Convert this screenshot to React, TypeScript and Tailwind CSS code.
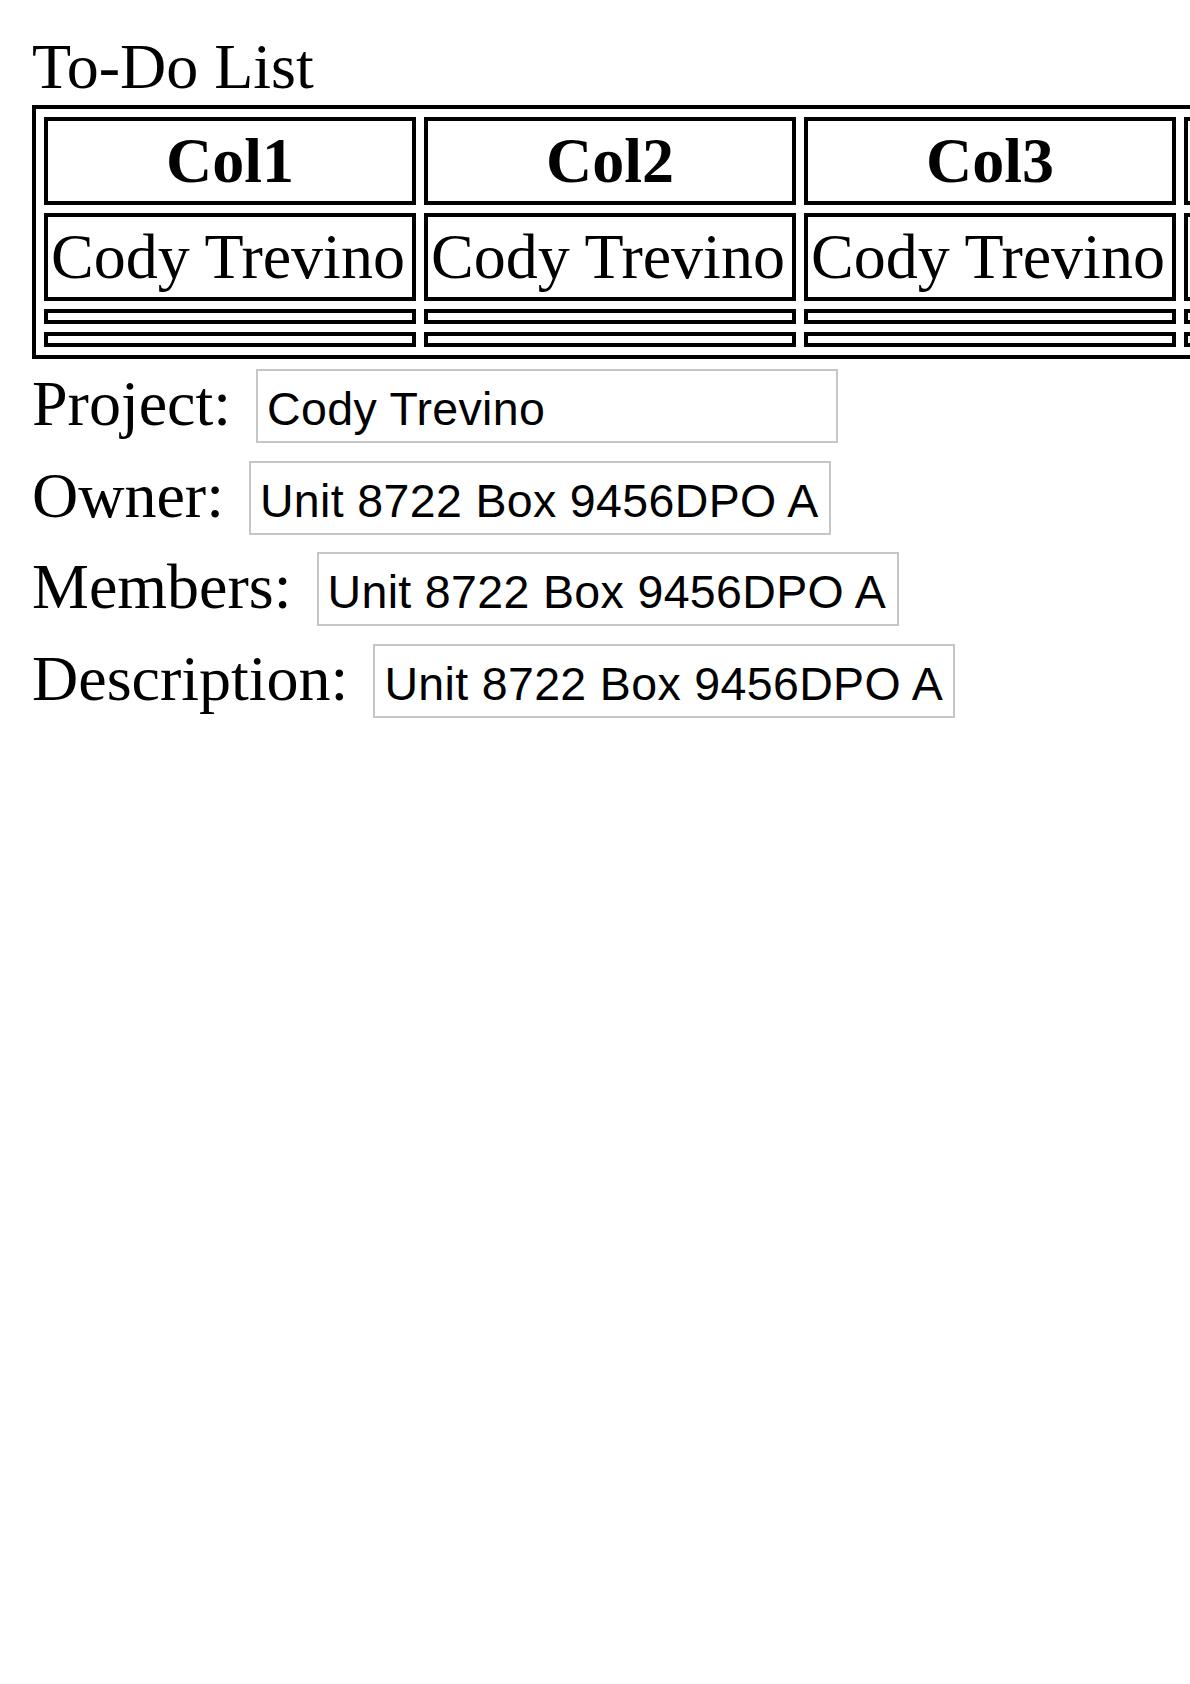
import React from "react";

const cols = ["Col1", "Col2", "Col3", "Col4"];

function Row({ label, value }: { label: string; value: string }) {
  return (
    <div className="flex items-baseline">
      <span className="leading-[72px]">{label}</span>
      <input
        readOnly
        value={value}
        className="ml-[25px] w-[582px] h-[74px] border-2 border-[#c6c6c6] pl-[9px] pr-[9px] pt-[6px] text-[46.5px] tracking-[0.35px] text-black outline-none bg-white"
        style={{ fontFamily: '"Liberation Sans", Arial, sans-serif' }}
      />
    </div>
  );
}

export default function App() {
  return (
    <div
      className="w-[1190px] min-h-[1684px] bg-white overflow-hidden pt-[31px] pl-[32px] text-black text-[64px]"
      style={{ fontFamily: '"Liberation Serif", "Times New Roman", serif' }}
    >
      <div className="leading-[72px] whitespace-nowrap">To-Do List</div>
      <table className="mt-[2px] border-separate border-spacing-x-[8px] border-spacing-y-[8px] border-4 border-black">
        <thead>
          <tr>
            {cols.map((c) => (
              <th
                key={c}
                className="w-[372px] min-w-[372px] border-4 border-black px-[3px] py-[4px] leading-[72px] font-bold text-center whitespace-nowrap"
              >
                {c}
              </th>
            ))}
          </tr>
        </thead>
        <tbody>
          <tr>
            {cols.map((c) => (
              <td
                key={c}
                className="border-4 border-black px-[3px] py-[4px] leading-[72px] text-left whitespace-nowrap"
              >
                Cody Trevino
              </td>
            ))}
          </tr>
          <tr>
            {cols.map((c) => (
              <td key={c} className="h-[15px] border-4 border-black px-[3px] py-[3px] leading-[0px]"></td>
            ))}
          </tr>
          <tr>
            {cols.map((c) => (
              <td key={c} className="h-[15px] border-4 border-black px-[3px] py-[3px] leading-[0px]"></td>
            ))}
          </tr>
        </tbody>
      </table>
      <div className="mt-[9px] flex flex-col gap-[16.5px]">
        <Row label="Project:" value="Cody Trevino" />
        <Row label="Owner:" value="Unit 8722 Box 9456DPO A" />
        <Row label="Members:" value="Unit 8722 Box 9456DPO A" />
        <Row label="Description:" value="Unit 8722 Box 9456DPO A" />
      </div>
    </div>
  );
}
